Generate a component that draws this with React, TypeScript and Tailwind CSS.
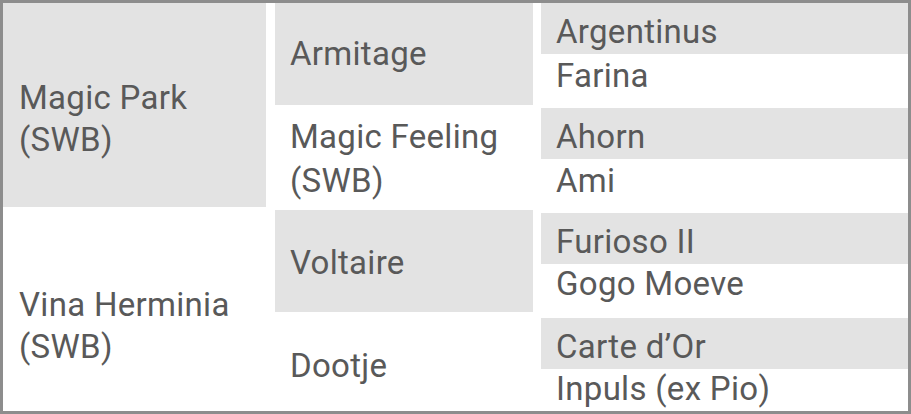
import React from "react";

const font = { fontFamily: "Roboto, 'Noto Sans', sans-serif" };

function Cell({
  children,
  gray,
  className = "",
}: {
  children: React.ReactNode;
  gray?: boolean;
  className?: string;
}) {
  return (
    <div
      className={`flex items-center pl-[15px] ${gray ? "bg-[#e3e3e3]" : "bg-white"} ${className}`}
    >
      <div className="leading-[42px]">{children}</div>
    </div>
  );
}

export default function App() {
  return (
    <div
      className="w-[911px] h-[414px] overflow-hidden bg-white border-[3px] border-[#8d8d8d] text-[33px] font-normal tracking-[0.3px] text-[#595959]"
      style={font}
    >
      <div className="flex gap-[8px]">
        {/* column 1 */}
        <div className="flex flex-col gap-[3px] w-[263px] mr-[1px]">
          <Cell gray className="h-[204px] pt-[28px] pl-[16px]">
            Magic Park
            <br />
            (SWB)
          </Cell>
          <Cell className="h-[208px] pt-[24px] pl-[16px]">
            Vina Herminia
            <br />
            (SWB)
          </Cell>
        </div>
        {/* column 2 */}
        <div className="flex flex-col w-[258px]">
          <Cell gray className="h-[102px]">
            Armitage
          </Cell>
          <Cell className="h-[102px] pt-[6px]">
            <div className="leading-[44px]">
              Magic Feeling
              <br />
              (SWB)
            </div>
          </Cell>
          <div className="h-[3px]" />
          <Cell gray className="h-[102px] pt-[3px]">
            Voltaire
          </Cell>
          <Cell className="h-[106px] pt-[2px]">Dootje</Cell>
        </div>
        {/* column 3 */}
        <div className="flex flex-col gap-[4px] flex-1">
          {[
            ["Argentinus", "Farina", "pb-[6px]"],
            ["Ahorn", "Ami", "pb-[6px]"],
            ["Furioso II", "Gogo Moeve", "pb-[10px]"],
            ["Carte d’Or", "Inpuls (ex Pio)", "pb-[10px]"],
          ].map(([a, b, pb], i) => (
            <div key={i} className="flex flex-col">
              <Cell gray className="h-[51px] pt-[7px]">
                {a}
              </Cell>
              <Cell className={`h-[50px] ${pb}`}>{b}</Cell>
            </div>
          ))}
        </div>
      </div>
    </div>
  );
}
